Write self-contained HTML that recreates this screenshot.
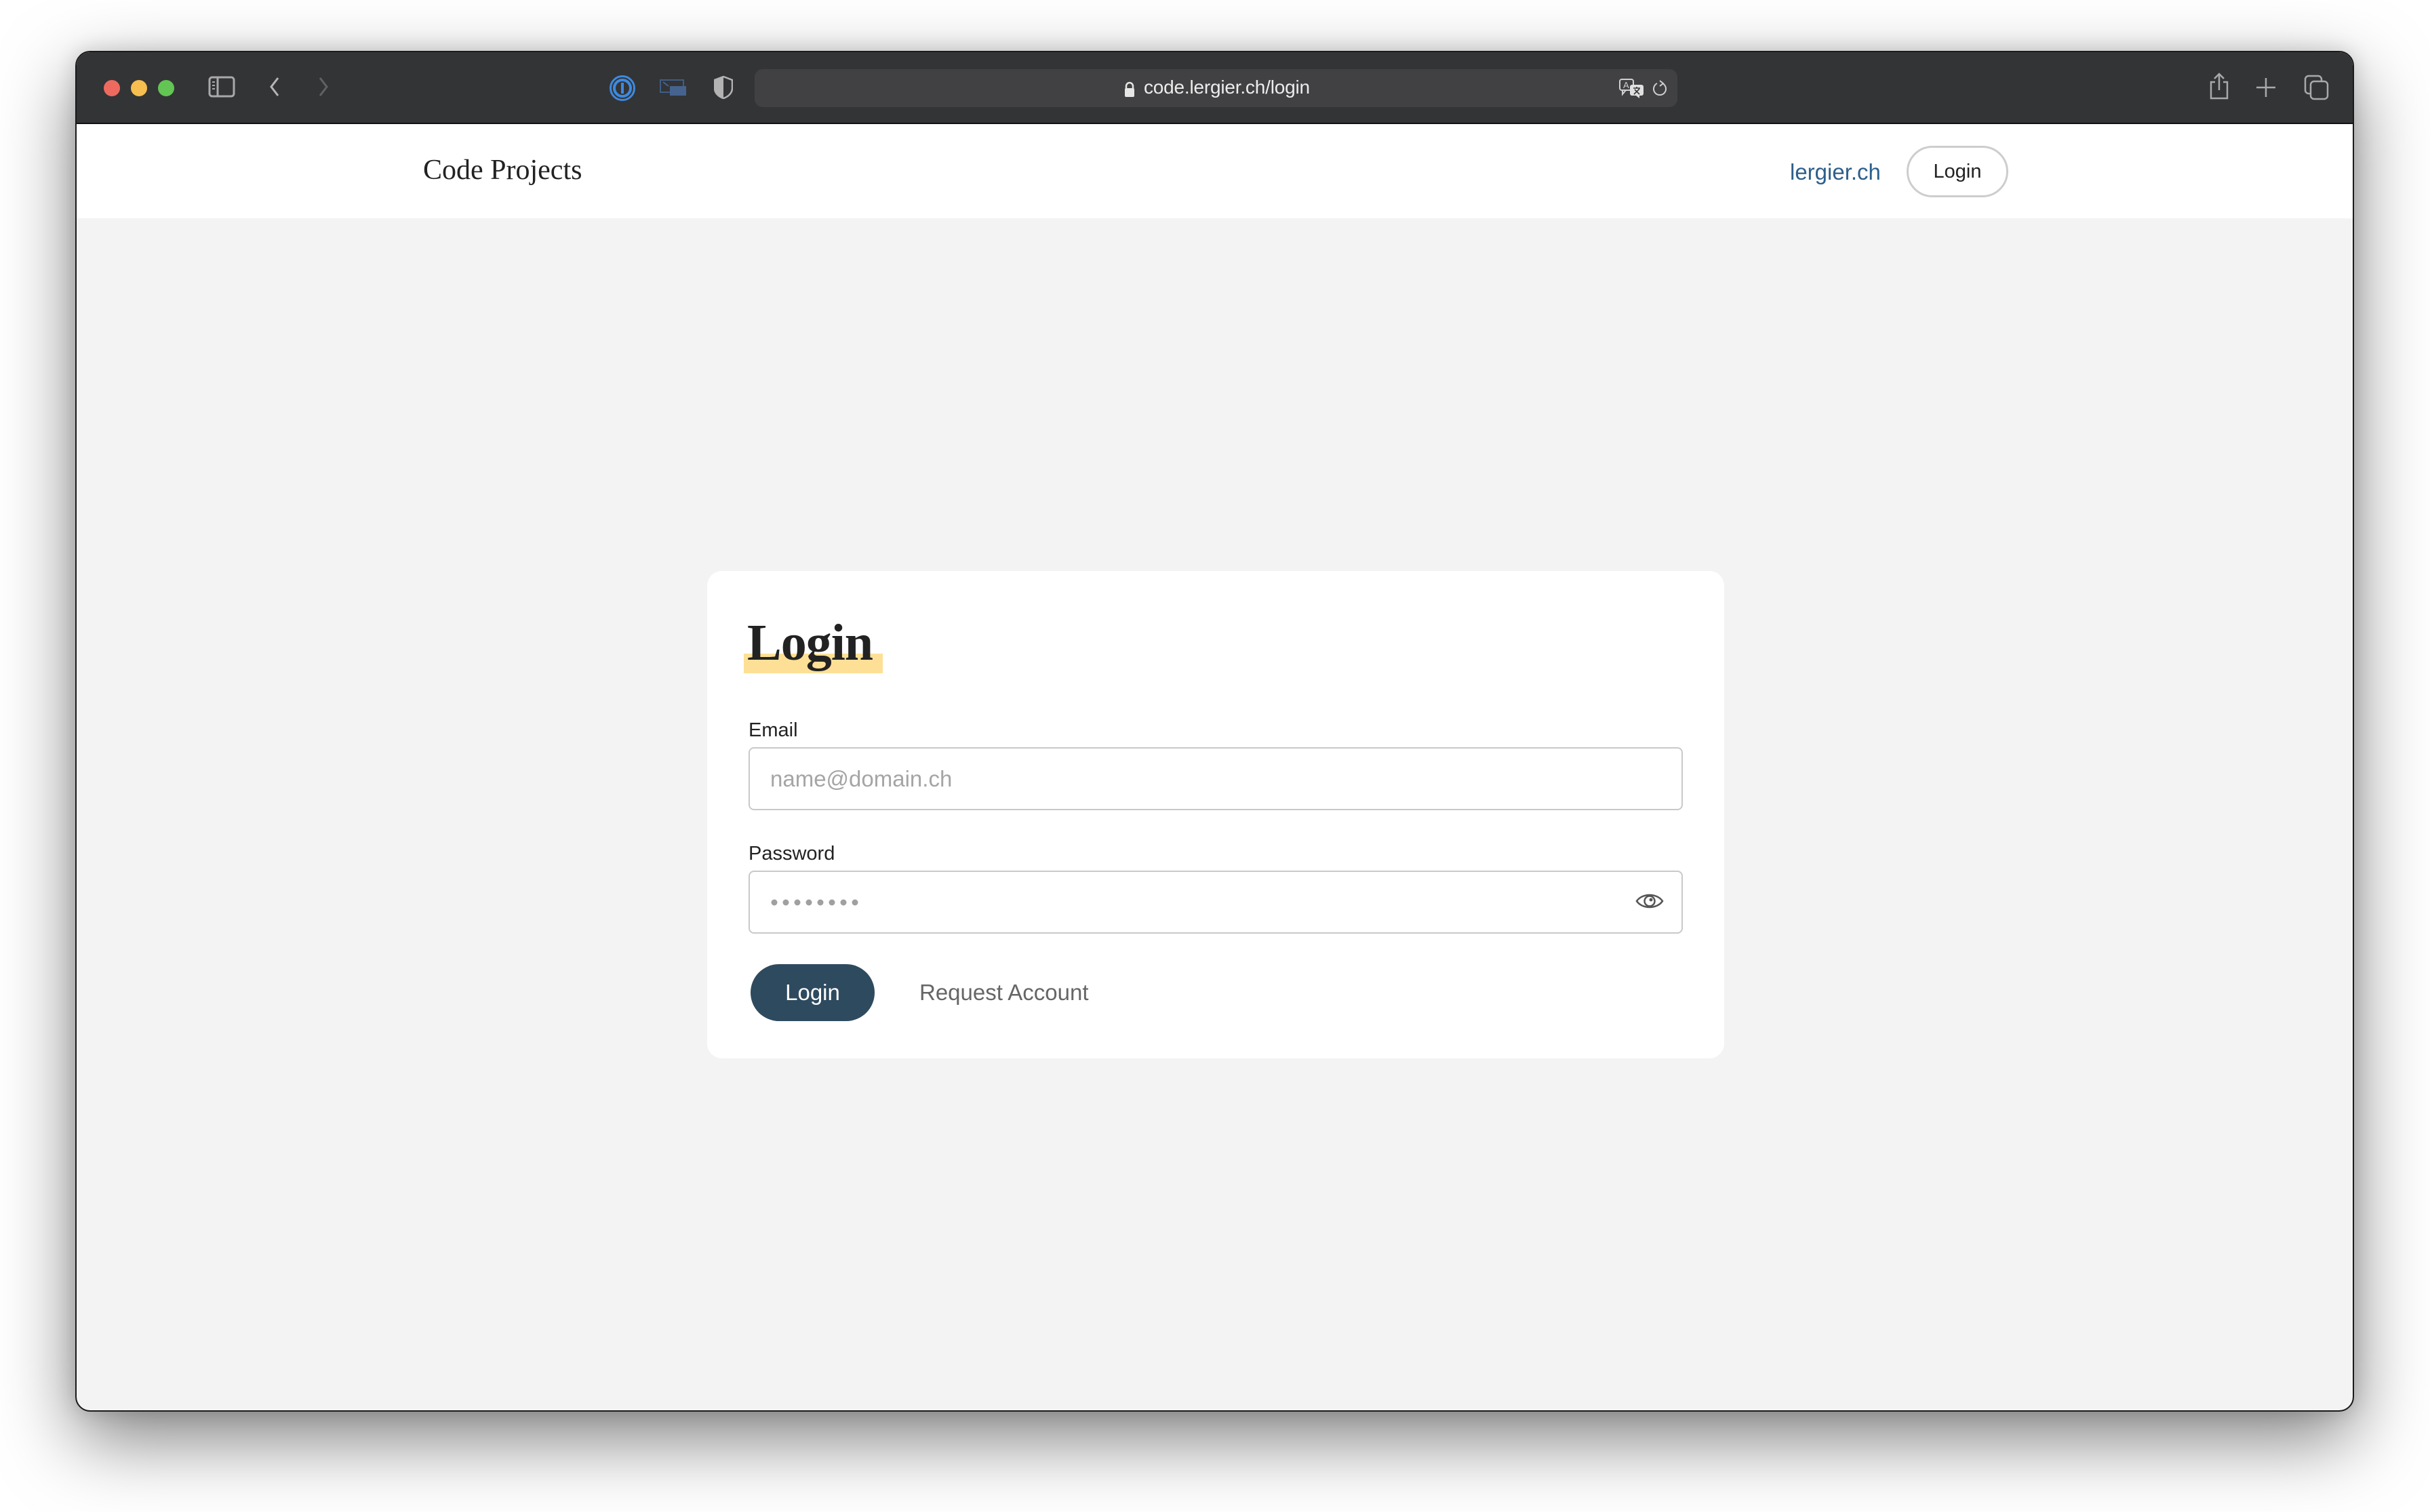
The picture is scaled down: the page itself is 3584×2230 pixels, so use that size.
<!DOCTYPE html>
<html><head><meta charset="utf-8">
<style>
*{margin:0;padding:0;box-sizing:border-box}
html,body{width:3584px;height:2230px;background:#fff;overflow:hidden;font-family:"Liberation Sans",sans-serif}
.win{position:absolute;left:111px;top:75px;width:3361px;height:2007px;border-radius:22px;background:#f3f3f3;overflow:hidden;border:2px solid #1a1a1a;box-shadow:0 40px 110px rgba(0,0,0,0.5),0 0 30px rgba(0,0,0,0.15)}
.tb{position:absolute;left:0;top:0;width:100%;height:106px;background:#333436;border-bottom:2px solid #111}
.nav{position:absolute;left:0;top:106px;width:100%;height:139px;background:#fff}
.abs{position:absolute}
.dot{position:absolute;width:24px;height:24px;border-radius:50%;top:41px}
.url{position:absolute;left:1000px;top:25px;width:1361px;height:56px;background:#414143;border-radius:12px}
.card{position:absolute;left:930px;top:765px;width:1500px;height:719px;background:#fff;border-radius:22px}
.lbl{position:absolute;left:61px;font-size:29px;color:#222;font-weight:500}
.inp{position:absolute;left:61px;width:1378px;height:93px;border:2px solid #c9c9c9;border-radius:8px;background:#fff}
</style></head><body>
<div class="win">
 <div class="tb">
  <div class="dot" style="left:40px;background:#ee6a5f"></div>
  <div class="dot" style="left:80px;background:#f5be4f"></div>
  <div class="dot" style="left:120px;background:#62c554"></div>
  <svg class="abs" style="left:194px;top:35px" width="40" height="32" viewBox="0 0 40 32"><rect x="2" y="2" width="36" height="28" rx="4" fill="none" stroke="#a9a9aa" stroke-width="3"/><line x1="14" y1="2" x2="14" y2="30" stroke="#a9a9aa" stroke-width="3"/><line x1="6" y1="9" x2="10" y2="9" stroke="#a9a9aa" stroke-width="2"/><line x1="6" y1="14" x2="10" y2="14" stroke="#a9a9aa" stroke-width="2"/><line x1="6" y1="19" x2="10" y2="19" stroke="#a9a9aa" stroke-width="2"/></svg>
  <svg class="abs" style="left:282px;top:35px" width="20" height="32" viewBox="0 0 20 32"><path d="M15 3 L5 16 L15 29" fill="none" stroke="#b5b5b6" stroke-width="3"/></svg>
  <svg class="abs" style="left:354px;top:35px" width="20" height="32" viewBox="0 0 20 32"><path d="M5 3 L15 16 L5 29" fill="none" stroke="#616163" stroke-width="3"/></svg>
  <svg class="abs" style="left:785px;top:33px" width="40" height="40" viewBox="0 0 40 40"><circle cx="20" cy="20" r="17.5" fill="none" stroke="#3d8ae0" stroke-width="3"/><circle cx="20" cy="20" r="12" fill="none" stroke="#3d8ae0" stroke-width="4"/><rect x="18" y="12" width="4" height="16" fill="#3d8ae0"/></svg>
  <svg class="abs" style="left:860px;top:40px" width="40" height="26" viewBox="0 0 40 26"><rect x="1" y="1" width="34" height="18" fill="none" stroke="#3f5d85" stroke-width="2"/><rect x="15" y="10" width="24" height="14" fill="#46638f"/><path d="M5 4 L13 10" stroke="#46638f" stroke-width="2"/></svg>
  <svg class="abs" style="left:940px;top:35px" width="28" height="34" viewBox="0 0 28 34"><path d="M14 1 L27 6 L27 18 C27 26 20 31 14 33 C8 31 1 26 1 18 L1 6 Z" fill="none" stroke="#b3b3b4" stroke-width="2.5"/><path d="M14 1 L1 6 L1 18 C1 26 8 31 14 33 Z" fill="#b3b3b4"/></svg>
  <div class="url">
   <svg class="abs" style="left:544px;top:18px" width="18" height="24" viewBox="0 0 18 24"><path d="M4 11 V7 a5 5 0 0 1 10 0 V11" fill="none" stroke="#e6e6e6" stroke-width="2.5"/><rect x="2" y="10" width="14" height="13" rx="2" fill="#e6e6e6"/></svg>
   <div class="abs" style="left:574px;top:11px;font-size:28px;color:#ececec;letter-spacing:-0.2px">code.lergier.ch/login</div>
   <svg class="abs" style="left:1275px;top:14px" width="38" height="30" viewBox="0 0 38 30"><rect x="1" y="1" width="20" height="16" rx="3" fill="none" stroke="#d0d0d0" stroke-width="2"/><path d="M5 17 L5 23 L10 17" fill="none" stroke="#d0d0d0" stroke-width="2"/><text x="6" y="14" font-size="13" fill="#d0d0d0" font-family="Liberation Sans">A</text><rect x="16" y="9" width="20" height="16" rx="3" fill="#e0e0e0"/><path d="M30 25 L30 29 L25 25" fill="#e0e0e0"/><path d="M21 14 H31 M26 12 V14 M22 23 L30 15 M23 16 L30 23" stroke="#333" stroke-width="1.6"/></svg>
   <svg class="abs" style="left:1323px;top:16px" width="24" height="26" viewBox="0 0 24 26"><path d="M16 5 A9 9 0 1 1 8 5" fill="none" stroke="#cfcfcf" stroke-width="2"/><path d="M12 1 L17 5 L12 9" fill="none" stroke="#cfcfcf" stroke-width="2"/></svg>
  </div>
  <svg class="abs" style="left:3145px;top:30px" width="30" height="40" viewBox="0 0 30 40"><path d="M9 14 H3 V38 H27 V14 H21" fill="none" stroke="#a9a9aa" stroke-width="2.5"/><path d="M15 2 V26 M8 9 L15 2 L22 9" fill="none" stroke="#a9a9aa" stroke-width="2.5"/></svg>
  <svg class="abs" style="left:3214px;top:37px" width="30" height="30" viewBox="0 0 30 30"><path d="M15 1 V29 M1 15 H29" stroke="#a9a9aa" stroke-width="2.5"/></svg>
  <svg class="abs" style="left:3285px;top:33px" width="38" height="38" viewBox="0 0 38 38"><rect x="2" y="2" width="24" height="26" rx="5" fill="none" stroke="#a9a9aa" stroke-width="2.5"/><rect x="10" y="10" width="25" height="26" rx="5" fill="#333436" stroke="#a9a9aa" stroke-width="2.5"/></svg>
 </div>
 <div class="nav">
  <div class="abs" style="left:511px;top:44px;font-family:'Liberation Serif',serif;font-size:42px;color:#222">Code Projects</div>
  <div class="abs" style="left:2527px;top:52px;font-size:33px;color:#2d5f8b">lergier.ch</div>
  <div class="abs" style="left:2699px;top:32px;width:150px;height:76px;border:3px solid #cdcdcd;border-radius:38px;font-size:29px;color:#222;text-align:center;line-height:70px">Login</div>
 </div>
 <div class="card">
  <div class="abs" style="left:54px;top:122px;width:205px;height:29px;background:#fde096"></div>
  <div class="abs" style="left:59px;top:63px;font-family:'Liberation Serif',serif;font-weight:bold;font-size:76px;color:#222;letter-spacing:-1px">Login</div>
  <div class="lbl" style="top:219px">Email</div>
  <div class="inp" style="top:260px"><div class="abs" style="left:30px;top:26px;font-size:33px;color:#a5a5a5">name@domain.ch</div></div>
  <div class="lbl" style="top:401px">Password</div>
  <div class="inp" style="top:442px">
   <svg class="abs" style="left:30px;top:39px" width="140" height="12" viewBox="0 0 140 12"><g fill="#a0a0a0"><circle cx="6" cy="6" r="4.5"/><circle cx="23" cy="6" r="4.5"/><circle cx="40" cy="6" r="4.5"/><circle cx="57" cy="6" r="4.5"/><circle cx="74" cy="6" r="4.5"/><circle cx="91" cy="6" r="4.5"/><circle cx="108" cy="6" r="4.5"/><circle cx="125" cy="6" r="4.5"/></g></svg>
   <svg class="abs" style="left:1306px;top:28px" width="42" height="30" viewBox="0 0 42 30"><path d="M2 15 C10 3 32 3 40 15 C32 27 10 27 2 15 Z" fill="none" stroke="#555" stroke-width="2.5"/><circle cx="21" cy="15" r="7.5" fill="none" stroke="#555" stroke-width="2.5"/><circle cx="23" cy="13" r="2.5" fill="#555"/></svg>
  </div>
  <div class="abs" style="left:64px;top:580px;width:183px;height:84px;background:#2e4a5e;border-radius:42px;color:#fff;font-size:33px;text-align:center;line-height:84px">Login</div>
  <div class="abs" style="left:313px;top:603px;font-size:33px;color:#666">Request Account</div>
 </div>
</div>
</body></html>
